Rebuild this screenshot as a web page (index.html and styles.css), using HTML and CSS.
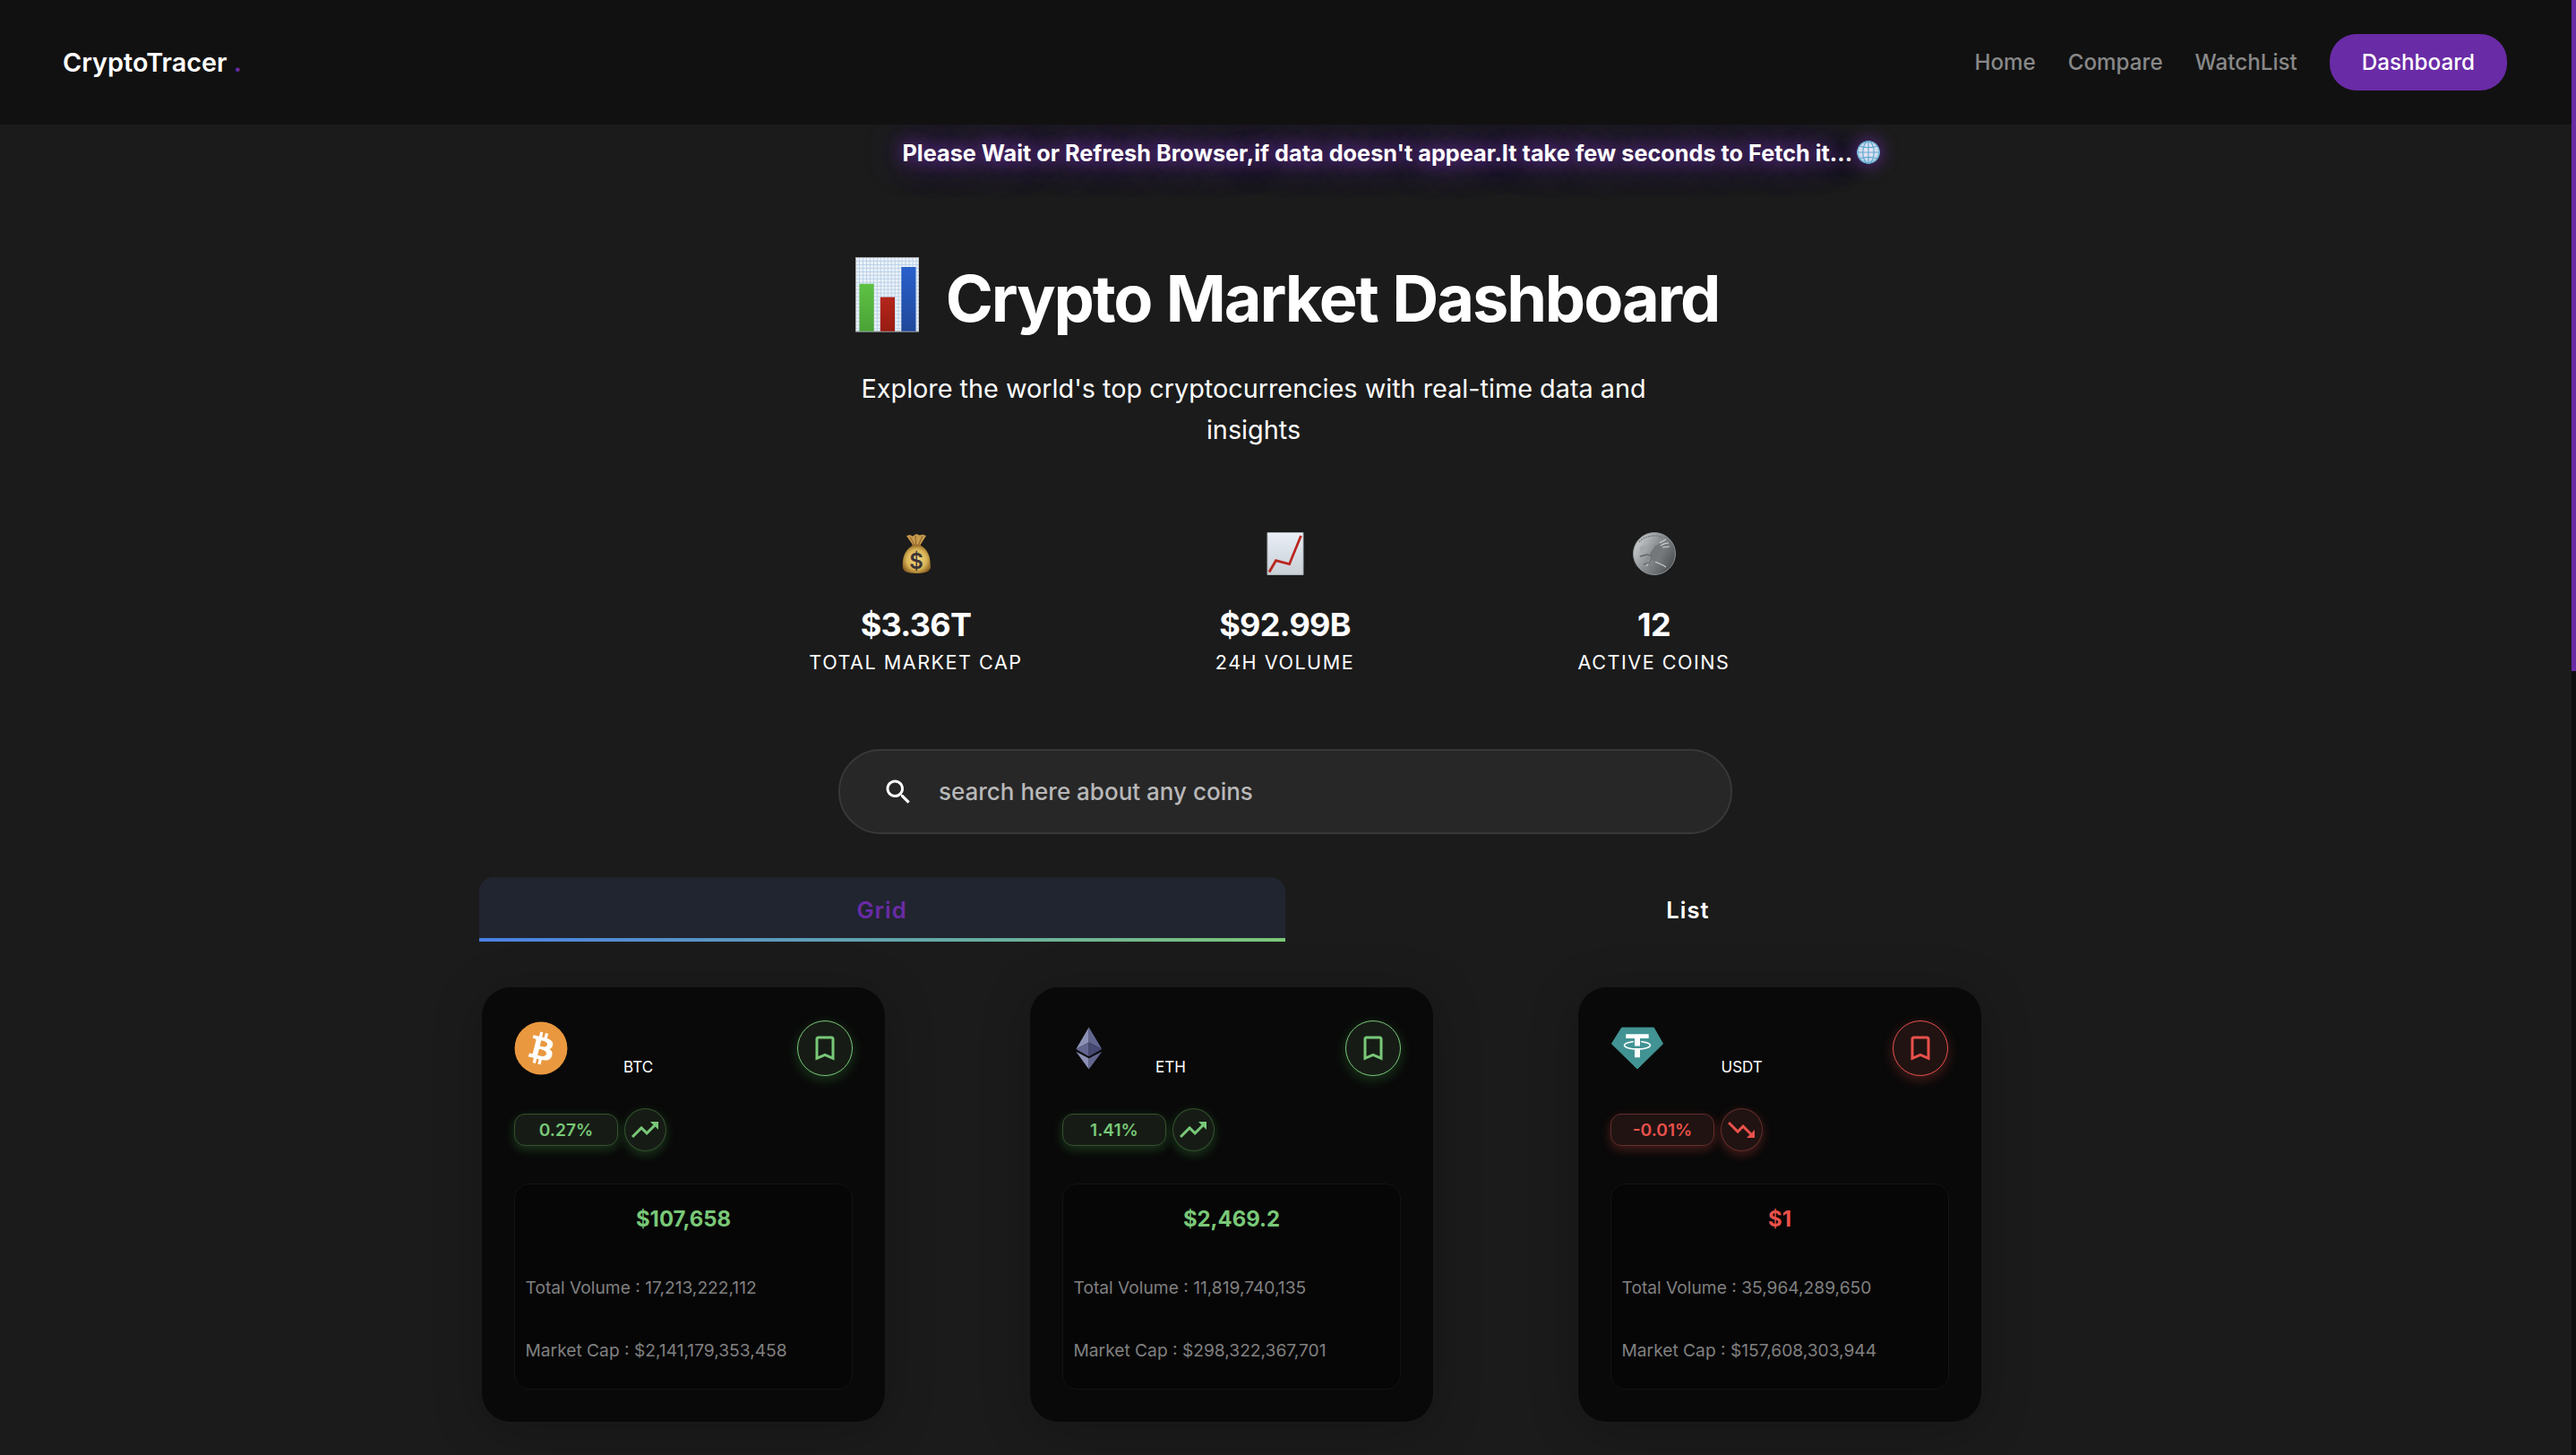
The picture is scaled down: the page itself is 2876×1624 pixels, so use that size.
FILE: index.html
```html
<!DOCTYPE html>
<html lang="en">
<head>
<meta charset="utf-8">
<title>CryptoTracer</title>
<link rel="stylesheet" href="styles.css">
</head>
<body>
<svg class="defs" aria-hidden="true">
  <symbol id="bookmark" viewBox="0 0 24 24"><path fill="currentColor" d="M17 3H7c-1.1 0-1.99.9-1.99 2L5 21l7-3 7 3V5c0-1.1-.9-2-2-2zm0 15-5-2.18L7 18V5h10v13z"/></symbol>
  <symbol id="trend-up" viewBox="0 0 24 24"><path fill="currentColor" d="m16 6 2.29 2.29-4.88 4.88-4-4L2 16.59 3.41 18l6-6 4 4 6.3-6.29L22 12V6z"/></symbol>
  <symbol id="trend-down" viewBox="0 0 24 24"><path fill="currentColor" d="m16 18 2.29-2.29-4.88-4.88-4 4L2 7.41 3.41 6l6 6 4-4 6.3 6.29L22 12v6z"/></symbol>
</svg>
<div class="window">
  <div class="page">
    <header class="header">
      <div class="logo">CryptoTracer <span class="dot">.</span></div>
      <nav class="nav">
        <a>Home</a><a>Compare</a><a>WatchList</a><a class="btn">Dashboard</a>
      </nav>
    </header>

    <div class="notice">
      <span>Please Wait or Refresh Browser,if data doesn't appear.It take few seconds to Fetch it...</span>
      <svg class="globe" viewBox="0 0 26 26">
        <defs><radialGradient id="gl" cx=".5" cy=".45" r=".55"><stop offset="0" stop-color="#efe6f5"/><stop offset=".7" stop-color="#cfdcf0"/><stop offset="1" stop-color="#8fc3e4"/></radialGradient></defs>
        <circle cx="13" cy="13" r="12.9" fill="url(#gl)"/>
        <g fill="none" stroke="#62a9cf" stroke-width="1.2"><circle cx="13" cy="13" r="12.2"/><ellipse cx="13" cy="13" rx="6.2" ry="12.2"/><path d="M13 .8v24.4M.8 13h24.4M3.2 6.2c5.500 1.700 14.100 1.700 19.600 0M3.200 19.800c5.500-1.700 14.100-1.700 19.600 0"/></g>
      </svg>
    </div>

    <main class="main">
      <h1 class="title">
        <svg class="title-icon" viewBox="0 0 72 84">
          <defs>
            <pattern id="mesh" width="4" height="4" patternUnits="userSpaceOnUse"><path d="M0 .5h4M.5 0v4" stroke="#b9d2ea" stroke-width="1"/></pattern>
            <linearGradient id="gn" x2="0" y2="1"><stop offset="0" stop-color="#5ec244"/><stop offset="1" stop-color="#4aa336"/></linearGradient>
            <linearGradient id="rd" x2="0" y2="1"><stop offset="0" stop-color="#b4261b"/><stop offset="1" stop-color="#981b12"/></linearGradient>
            <linearGradient id="bl" x2="0" y2="1"><stop offset="0" stop-color="#2860cb"/><stop offset="1" stop-color="#20489a"/></linearGradient>
          </defs>
          <path fill="#eef2f7" d="M0 0h72v84H0z"/><path fill="url(#mesh)" d="M0 0h72v84H0z"/>
          <path fill="none" stroke="#a3a7ab" d="M.5.5h71v83H.5z"/>
          <path fill="url(#gn)" d="M4.500 30h16.300v53.500H4.500z"/><path fill="url(#rd)" d="M28 45h16.300v38.500H28z"/><path fill="url(#bl)" d="M51.700 11H68v72.500H51.700z"/>
        </svg>
        <span>Crypto Market Dashboard</span>
      </h1>
      <p class="subtitle">Explore the world's top cryptocurrencies with real-time data and insights</p>

      <section class="stats">
        <div class="stat">
          <svg class="stat-icon" viewBox="0 0 48 48">
            <defs><radialGradient id="bag" cx=".5" cy=".5" r=".55"><stop offset="0" stop-color="#f3dc84"/><stop offset=".65" stop-color="#d9b456"/><stop offset="1" stop-color="#8f6524"/></radialGradient></defs>
            <path fill="#c79a4c" d="M13 4l4-1 3 1.500 4-2.500 4 1.500 3-1 4 1.500-6 9.500 0 3h-9l-.5-3z"/>
            <path stroke="#8a5f28" stroke-width="1" fill="none" d="M17 5l4.500 9M23 4l.5 10M31 4l-4.500 10"/>
            <path fill="url(#bag)" d="M20 15h9c7 3 10.500 12 10.500 18 0 5 1.500 6-.5 8.500-2 3.500-8 4.500-15 4.500s-12.500-1-14-4c-1.500-2-1.500-5-1-10 .5-6 4-14 11-17z"/>
            <path stroke="#9b6d2c" stroke-width="1.600" d="M19.500 14.500h9.500"/>
            <text class="bag-sign" x="24" y="40.500">$</text>
          </svg>
          <div class="stat-value">$3.36T</div><div class="stat-label">TOTAL MARKET CAP</div>
        </div>
        <div class="stat">
          <svg class="stat-icon" viewBox="0 0 48 48">
            <defs><linearGradient id="paper" x2="0" y2="1"><stop offset="0" stop-color="#e9eef6"/><stop offset="1" stop-color="#c9d0d6"/></linearGradient></defs>
            <path fill="url(#paper)" stroke="#a9b0b7" d="M4 .5h40v47H4z"/>
            <path fill="none" stroke="#b9271f" stroke-width="2.800" d="M6 44.500l7.500-12.800 15 4L41.500 4"/>
          </svg>
          <div class="stat-value">$92.99B</div><div class="stat-label">24H VOLUME</div>
        </div>
        <div class="stat">
          <svg class="stat-icon" viewBox="0 0 48 48">
            <defs><linearGradient id="coin" x1="0" y1=".2" x2="1" y2=".8"><stop offset="0" stop-color="#d2d5d7"/><stop offset=".45" stop-color="#8b8f92"/><stop offset="1" stop-color="#484c4f"/></linearGradient></defs>
            <circle cx="24" cy="24" r="23.500" fill="url(#coin)" stroke="#8d9194"/>
            <path fill="none" stroke="#77797b" stroke-width="1.500" stroke-dasharray="2 1" d="M7 11C13 4 25 2 33 6"/>
            <path fill="#74787b" d="M25 15l7-3 3 4-1 6-5 5 3 5-4 4-6-5-3-7z"/>
            <path fill="none" stroke="#d0d3d5" stroke-width="1.100" d="M31 15c3-2 5-3 9-3M33 17l8-1M30 12l7-4M25 33l9 4 3 2M15 38l5-8"/>
            <path fill="none" stroke="#606467" stroke-width="1.300" d="M8 27l8-2 6 2M12 36l6-2 3-5"/>
            <circle cx="12" cy="19" r="4" fill="#a3a7aa"/>
          </svg>
          <div class="stat-value">12</div><div class="stat-label">ACTIVE COINS</div>
        </div>
      </section>

      <div class="search">
        <svg class="search-icon" viewBox="0 0 24 24"><path fill="#fff" d="M15.500 14h-.79l-.28-.27C15.410 12.590 16 11.110 16 9.500 16 5.910 13.090 3 9.500 3S3 5.910 3 9.500 5.910 16 9.500 16c1.610 0 3.090-.59 4.230-1.570l.27.28v.79l5 4.990L20.490 19l-4.990-5zm-6 0C7.010 14 5 11.990 5 9.500S7.010 5 9.500 5 14 7.010 14 9.500 11.990 14 9.500 14z"/></svg>
        <span>search here about any coins</span>
      </div>

      <div class="tabs">
        <div class="tab active">Grid</div>
        <div class="tab">List</div>
      </div>

      <section class="cards">
        <article class="card up">
          <div class="card-head">
            <svg class="coin round" viewBox="-.3 -.3 32.600 32.600"><circle cx="16" cy="16" r="16" fill="#e9983f"/><path fill="#fff" d="M23.189 14.020c.314-2.096-1.283-3.223-3.465-3.975l.708-2.840-1.728-.43-.69 2.765c-.454-.114-.92-.22-1.385-.326l.695-2.783L15.596 6l-.708 2.839c-.376-.086-.746-.17-1.104-.26l.002-.009-2.384-.595-.46 1.846s1.283.294 1.256.312c.7.175.826.638.805 1.006l-.806 3.235c.048.012.11.03.18.057l-.183-.045-1.130 4.532c-.086.212-.303.531-.793.41.018.025-1.256-.313-1.256-.313l-.858 1.978 2.250.561c.418.105.828.215 1.231.318l-.715 2.872 1.727.43.708-2.840c.472.127.93.245 1.378.357l-.706 2.828 1.728.43.715-2.866c2.948.558 5.164.333 6.097-2.333.752-2.146-.037-3.385-1.588-4.192 1.130-.26 1.980-1.003 2.207-2.538zm-3.950 5.538c-.533 2.147-4.148.986-5.320.695l.95-3.805c1.172.293 4.929.872 4.370 3.110zm.535-5.569c-.487 1.953-3.495.96-4.470.717l.86-3.450c.975.243 4.118.696 3.610 2.733z"/></svg>
            <span class="symbol btc">BTC</span>
            <span class="save"><svg><use href="#bookmark"/></svg></span>
          </div>
          <div class="change"><span class="chip">0.27%</span><span class="trend"><svg><use href="#trend-up"/></svg></span></div>
          <div class="info"><div class="price">$107,658</div><div class="row">Total Volume : 17,213,222,112</div><div class="row">Market Cap : $2,141,179,353,458</div></div>
        </article>
        <article class="card up">
          <div class="card-head">
            <svg class="coin" viewBox="0 0 60 60">
              <path fill="#8d90b5" d="M29.700 6.600 15.300 30.900l14.400-7.300z"/><path fill="#62668f" d="M29.700 6.600 44.300 30.900l-14.600-7.300z"/>
              <path fill="#62668f" d="M15.300 30.900l14.400-7.300v15.600z"/><path fill="#454872" d="M44.300 30.900l-14.600-7.300v15.600z"/>
              <path fill="#8d90b5" d="M15.300 33.700l14.400 7.600v12.200z"/><path fill="#62668f" d="M44.300 33.700l-14.600 7.600v12.200z"/>
            </svg>
            <span class="symbol eth">ETH</span>
            <span class="save"><svg><use href="#bookmark"/></svg></span>
          </div>
          <div class="change"><span class="chip">1.41%</span><span class="trend"><svg><use href="#trend-up"/></svg></span></div>
          <div class="info"><div class="price">$2,469.2</div><div class="row">Total Volume : 11,819,740,135</div><div class="row">Market Cap : $298,322,367,701</div></div>
        </article>
        <article class="card down">
          <div class="card-head">
            <svg class="coin" viewBox="0 0 60 60">
              <path fill="#429393" stroke="#429393" stroke-linejoin="round" d="M12.600 7.100h35.800L58.600 25 30 53 1.400 25z"/>
              <ellipse cx="30" cy="26.700" rx="14.500" ry="4.200" fill="none" stroke="#fff" stroke-width="1.600"/>
              <path fill="#429393" d="M25.800 20h8.400v8h-8.400z"/>
              <path fill="#fff" d="M17.300 14.300h25.400v4.700H33v8.500h-6V19h-9.700zM27 30.500h6v9.800h-6z"/>
            </svg>
            <span class="symbol usdt">USDT</span>
            <span class="save"><svg><use href="#bookmark"/></svg></span>
          </div>
          <div class="change"><span class="chip">-0.01%</span><span class="trend"><svg><use href="#trend-down"/></svg></span></div>
          <div class="info"><div class="price">$1</div><div class="row">Total Volume : 35,964,289,650</div><div class="row">Market Cap : $157,608,303,944</div></div>
        </article>
      </section>
    </main>
  </div>
  <div class="scrollbar"><div class="thumb"></div></div>
</div>
</body>
</html>
```
FILE: styles.css
```css
* { box-sizing: border-box; }
body { margin: 0; background: #1b1b1b; color: #fff; font-family: Inter, "Liberation Sans", sans-serif; }
.defs { display: none; }
svg { display: block; flex: none; }

.window { display: flex; height: 1624px; overflow: hidden; }
.page { flex: 1; min-width: 0; }
.scrollbar { width: 5px; background: #0f0f0f; }
.thumb { height: 749px; background: #6a2ba6; }

.header { position: relative; z-index: 1; display: flex; align-items: center; justify-content: space-between; height: 139px; padding: 0 72px 0 70px; background: #111; }
.logo { font-size: 28.8px; font-weight: 600; }
.dot { color: #6a2ba6; }
.nav { display: flex; align-items: center; gap: 36px; font-size: 24.2px; font-weight: 520; color: #888; }
.btn { height: 63px; padding: 0 36px; border-radius: 30px; background: #6a2ba6; color: #fff; line-height: 63px; }

.notice { display: flex; align-items: center; gap: 5px; height: 52px; padding: 12px 0 0 1007.5px; font-size: 25.25px; font-weight: 700; line-height: 40px; text-shadow: 0 0 18px #7430b6, 0 0 40px #7a3cc0; }
.globe { width: 26px; height: 26px; margin-bottom: 2px; border-radius: 50%; box-shadow: 0 0 20px #6a2ba6; }

.main { width: 2870px; }
.title { display: flex; align-items: center; justify-content: center; gap: 29.5px; height: 80px; margin: 101.5px 0 0; padding-left: 4px; font-size: 72px; font-weight: 700; line-height: 80px; letter-spacing: -2.1px; word-spacing: 1.5px; }
.title-icon { width: 71.500px; height: 83.300px; margin-bottom: 7px; }
.subtitle { width: 900px; margin: 38.500px 0 0 949.500px; font-size: 28.8px; line-height: 46px; text-align: center; }

.stats { display: grid; grid-template-columns: repeat(3, 412px); justify-content: center; margin: 90.500px 1px 0 0; text-align: center; }
.stat-icon { width: 48px; height: 48px; margin: 0 auto 33.700px; }
.bag-sign { font-size: 24px; font-weight: 600; text-anchor: middle; fill: #3c3436; }
.stat-value { font-size: 36px; font-weight: 700; line-height: 44px; letter-spacing: -.72px; }
.stat-label { margin-top: 7px; font-size: 21.600px; line-height: 26px; letter-spacing: 1.500px; }

.search { display: flex; align-items: center; gap: 27px; width: 998px; height: 95px; margin: 84px auto 0; padding-left: 47px; border: 2px solid #383838; border-radius: 48px; background: #272727; color: #b8b8b8; font-size: 26px; font-weight: 500; }
.search-icon { width: 36px; height: 36px; }

.tabs { display: grid; grid-template-columns: 1fr 1fr; width: 1800px; height: 72px; margin: 48px auto 0; }
.tab { padding: 3px 1px 0 0; font-size: 25.6px; font-weight: 600; line-height: 68px; letter-spacing: 1px; text-align: center; }
.active { border-radius: 16px 16px 0 0; background: linear-gradient(90deg, #4a80e4, #7bc878) bottom / 100% 4px no-repeat #212530; color: #6a2ba6; }

.cards { display: grid; grid-template-columns: repeat(3, 450px); gap: 162px; margin: 51px 0 0 538px; }
.card { height: 485px; padding: 37px 36px 36px; border-radius: 32px; background: #090909; box-shadow: 0 0 0 2px #191919, 0 8px 56px rgba(0, 0, 0, .22); }
.up { --tone: #79c878; --tint: #161c15; --edge: #35522f; --glow: rgba(76, 175, 80, .28); }
.down { --tone: #e9514a; --tint: #201312; --edge: #632e2b; --glow: rgba(233, 81, 74, .28); }
.card-head { display: flex; align-items: center; height: 62px; }
.coin { width: 60px; height: 60px; }
.symbol { align-self: flex-end; font-size: 17px; line-height: 20px; }
.btc { margin-left: 62px; }
.eth { margin-left: 44px; }
.usdt { margin-left: 63.500px; }
.save { display: grid; place-items: center; width: 62px; height: 62px; margin-left: auto; border: 1px solid var(--tone); border-radius: 50%; background: var(--tint); color: var(--tone); box-shadow: 0 4px 14px var(--glow); }
.down .save { margin-right: 1px; }
.save svg, .trend svg { width: 36px; height: 36px; }
.change { display: flex; align-items: center; gap: 7px; height: 48px; margin-top: 36px; }
.chip { width: 116px; height: 36px; border: 1px solid var(--edge); border-radius: 12px; background: var(--tint); color: var(--tone); font-size: 19.200px; font-weight: 600; line-height: 34px; text-align: center; box-shadow: 0 4px 12px var(--glow); }
.trend { display: grid; place-items: center; width: 47px; height: 48px; padding-right: 1px; border: 1px solid var(--edge); border-radius: 50%; background: var(--tint); color: var(--tone); box-shadow: 0 4px 12px var(--glow); }
.info { height: 230px; margin-top: 36px; padding: 24px 12px; border: 1px solid #131313; border-radius: 16px; background: #060606; }
.price { margin: 0 0 49px; color: var(--tone); font-size: 23.900px; font-weight: 700; line-height: 30px; text-align: center; }
.row { margin: 0 0 46px -.5px; color: #808080; font-size: 19.200px; line-height: 24px; white-space: nowrap; }
```
